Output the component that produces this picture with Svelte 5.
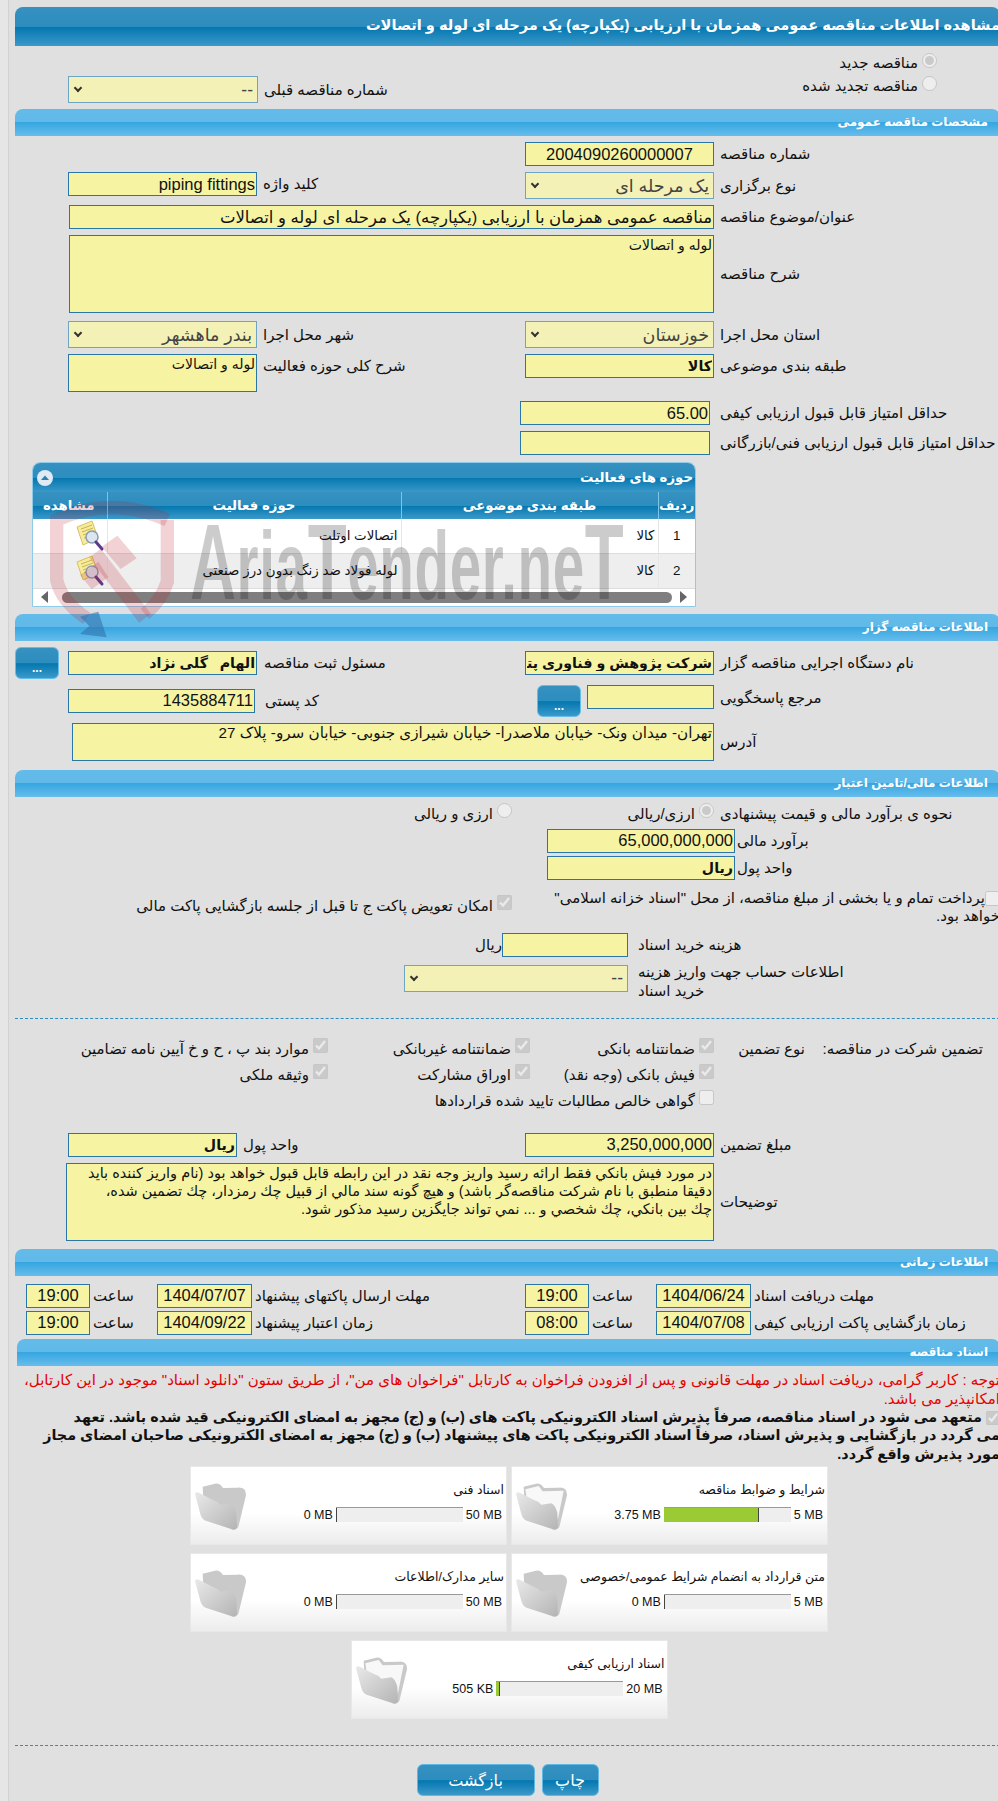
<script>
	const bars = {
		title: 'مشاهده اطلاعات مناقصه عمومی همزمان با ارزیابی (یکپارچه) یک مرحله ای لوله و اتصالات'
	};

	const activities = [
		{ id: 1, cat: 'کالا', name: 'اتصالات اوتلت' },
		{ id: 2, cat: 'کالا', name: 'لوله فولاد ضد زنگ بدون درز صنعتی' }
	];

	const docs = [
		{ title: 'شرایط و ضوابط مناقصه', used: '3.75 MB', max: '5 MB', pct: 75, full: true },
		{ title: 'اسناد فنی', used: '0 MB', max: '50 MB', pct: 0, full: false },
		{ title: 'متن قرارداد به انضمام شرایط عمومی/خصوصی', used: '0 MB', max: '5 MB', pct: 0, full: false },
		{ title: 'سایر مدارک/اطلاعات', used: '0 MB', max: '50 MB', pct: 0, full: false },
		{ title: 'اسناد ارزیابی کیفی', used: '505 KB', max: '20 MB', pct: 2.5, full: true }
	];

	const guarantees = [
		[{ label: 'ضمانتنامه بانکی', on: true }, { label: 'ضمانتنامه غیربانکی', on: true }, { label: 'موارد بند پ ، ح و خ آیین نامه تضامین', on: true }],
		[{ label: 'فیش بانکی (وجه نقد)', on: true }, { label: 'اوراق مشارکت', on: true }, { label: 'وثیقه ملکی', on: true }]
	];

	const note = 'در مورد فيش بانكي فقط ارائه رسيد واريز وجه نقد در اين رابطه قابل قبول خواهد بود (نام واریز کننده باید\nدقيقا منطبق با نام شرکت مناقصه‌گر باشد) و هيچ گونه سند مالي از قبيل چك رمزدار، چك تضمين شده،\nچك بين بانكي، چك شخصي و ... نمي تواند جايگزين رسيد مذكور شود.';
</script>

<div class="page">
	<div class="sheet">
		<div class="bar dark">{bars.title}</div>

		<!-- tender type -->
		<div class="grid top-rows">
			<div class="opt-cell"><label class="opt"><input type="radio" name="kind" checked disabled /><span>مناقصه جدید</span></label></div>
			<div></div>
			<div class="opt-cell"><label class="opt"><input type="radio" name="kind" disabled /><span>مناقصه تجدید شده</span></label></div>
			<div class="f left">
				<span class="sel w190"><select disabled><option>--</option></select><i></i></span>
				<span class="lab">شماره مناقصه قبلی</span>
			</div>
		</div>

		<div class="bar light">مشخصات مناقصه عمومی</div>
		<div class="grid general">
			<div class="f"><input class="w189 c" readonly value="2004090260000007" /><span class="lab">شماره مناقصه</span></div>
			<div></div>

			<div class="f"><span class="sel w189"><select disabled><option>یک مرحله ای</option></select><i></i></span><span class="lab">نوع برگزاری</span></div>
			<div class="f left"><input class="w189 h25" readonly value="piping fittings" /><span class="lab">کلید واژه</span></div>

			<div class="f wide"><input class="w645" readonly value="مناقصه عمومی همزمان با ارزیابی (یکپارچه) یک مرحله ای لوله و اتصالات" /><span class="lab">عنوان/موضوع مناقصه</span></div>

			<div class="f wide"><textarea class="w645 h78" readonly>لوله و اتصالات</textarea><span class="lab">شرح مناقصه</span></div>

			<div class="f"><span class="sel w189"><select disabled><option>خوزستان</option></select><i></i></span><span class="lab">استان محل اجرا</span></div>
			<div class="f left"><span class="sel w189"><select disabled><option>بندر ماهشهر</option></select><i></i></span><span class="lab">شهر محل اجرا</span></div>

			<div class="f"><input class="w189 strong" readonly value="کالا" /><span class="lab">طبقه بندی موضوعی</span></div>
			<div class="f left start"><textarea class="w189 h38" readonly>لوله و اتصالات</textarea><span class="lab lab-top">شرح کلی حوزه فعالیت</span></div>

			<div class="f shifted"><input class="w190" readonly value="65.00" /><span class="lab">حداقل امتیاز قابل قبول ارزیابی کیفی</span></div>
			<div></div>
			<div class="f shifted"><input class="w190 h25" readonly value="" /><span class="lab">حداقل امتیاز قابل قبول ارزیابی فنی/بازرگانی</span></div>
			<div></div>
		</div>

		<div class="activity">
			<div class="activity-head">
				<span>حوزه های فعالیت</span>
				<span class="collapse"><svg viewBox="0 0 16 16" width="16" height="16"><circle cx="8" cy="8" r="8" fill="#dfeaf4"/><path d="M4 10 L8 5.5 L12 10 Z" fill="#2d7fb0"/></svg></span>
			</div>
			<table>
				<colgroup><col class="c1" /><col class="c2" /><col class="c3" /><col class="c4" /></colgroup>
				<thead>
					<tr><th>ردیف</th><th>طبقه بندی موضوعی</th><th>حوزه فعالیت</th><th>مشاهده</th></tr>
				</thead>
				<tbody>
					{#each activities as row}
						<tr>
							<td class="num">{row.id}</td>
							<td>{row.cat}</td>
							<td>{row.name}</td>
							<td class="view">
								<svg viewBox="0 0 30 32" width="30" height="32">
									<path d="M2 7 L17 1 L23 18 L8 25 Z" fill="#f7ec9c" stroke="#d8c060" stroke-width="1"/>
									<path d="M6 9 L17 5 M7 12 L18 8 M8 15 L19 11 M9 18 L16 15" stroke="#c9b255" stroke-width="1"/>
									<circle cx="17" cy="17" r="6" fill="#dbe6f0" stroke="#8a9db0" stroke-width="1.5"/>
									<path d="M21 22 L27 29" stroke="#5a3b8c" stroke-width="3" stroke-linecap="round"/>
								</svg>
							</td>
						</tr>
					{/each}
				</tbody>
			</table>
			<div class="hscroll">
				<span class="tri tri-l"></span>
				<span class="thumb"></span>
				<span class="tri tri-r"></span>
			</div>
		</div>

		<div class="bar light gap7">اطلاعات مناقصه گزار</div>
		<div class="grid owner">
			<div class="f"><input class="w189 strong" readonly value="شرکت پژوهش و فناوری پتروشیمی" /><span class="lab">نام دستگاه اجرایی مناقصه گزار</span></div>
			<div class="f left-btn"><button class="more">...</button><input class="w189 strong" readonly value="الهام   گلی نژاد" /><span class="lab lab8">مسئول ثبت مناقصه</span></div>

			<div class="f ref"><button class="more">...</button><input class="w127" readonly value="" /><span class="lab">مرجع پاسخگویی</span></div>
			<div class="f left low"><input class="w187" readonly value="1435884711" /><span class="lab lab10">کد پستی</span></div>

			<div class="f wide addr"><textarea class="w642 h38" readonly>تهران- میدان ونک- خیابان ملاصدرا- خیابان شیرازی جنوبی- خیابان سرو- پلاک 27</textarea><span class="lab">آدرس</span></div>
		</div>

		<div class="bar light">اطلاعات مالی/تامین اعتبار</div>
		<div class="grid estimate-kind">
			<div class="f"><span class="opt-box"><label class="opt"><input type="radio" name="cur" checked disabled /><span>ارزی/ریالی</span></label></span><span class="lab">نحوه ی برآورد مالی و قیمت پیشنهادی</span></div>
			<div class="opt-end"><label class="opt"><input type="radio" name="cur" disabled /><span>ارزی و ریالی</span></label></div>
		</div>
		<div class="money">
			<div class="f"><input class="w188" readonly value="65,000,000,000" /><span class="lab">برآورد مالی</span></div>
			<div class="f"><input class="w188 strong" readonly value="ریال" /><span class="lab">واحد پول</span></div>
		</div>
		<div class="grid checks-two">
			<div class="treasury"><input type="checkbox" disabled />پرداخت تمام و یا بخشی از مبلغ مناقصه، از محل "اسناد خزانه اسلامی" خواهد بود.</div>
			<div class="opt-end swap"><label class="opt"><input type="checkbox" checked disabled /><span>امکان تعویض پاکت ج تا قبل از جلسه بازگشایی پاکت مالی</span></label></div>
		</div>
		<div class="cost">
			<span class="rial">ریال</span>
			<input class="w126" readonly value="" />
			<span class="lab">هزینه خرید اسناد</span>
		</div>
		<div class="account">
			<span class="sel w224"><select disabled><option>--</option></select><i></i></span>
			<span class="lab two">اطلاعات حساب جهت واریز هزینه خرید اسناد</span>
		</div>

		<div class="dots"></div>

		<div class="guarantee">
			<span class="g-title">تضمین شرکت در مناقصه:</span>
			<span class="g-kind">نوع تضمین</span>
			{#each guarantees[0] as g}
				<label class="opt"><input type="checkbox" checked={g.on} disabled /><span>{g.label}</span></label>
			{/each}
			<span></span><span></span>
			{#each guarantees[1] as g}
				<label class="opt"><input type="checkbox" checked={g.on} disabled /><span>{g.label}</span></label>
			{/each}
			<span></span><span></span>
			<label class="opt span3"><input type="checkbox" disabled /><span>گواهی خالص مطالبات تایید شده قراردادها</span></label>
		</div>

		<div class="grid amount">
			<div class="f"><input class="w189" readonly value="3,250,000,000" /><span class="lab">مبلغ تضمین</span></div>
			<div class="f left"><input class="w169 strong" readonly value="ریال" /><span class="lab">واحد پول</span></div>
			<div class="f wide wide-note"><textarea class="w648 h78 note" readonly>{note}</textarea><span class="lab">توضیحات</span></div>
		</div>

		<div class="bar light">اطلاعات زمانی</div>
		<div class="grid times">
			<div class="t"><input class="time" readonly value="19:00" /><span class="sa">ساعت</span><input class="date" readonly value="1404/06/24" /><span class="lab">مهلت دریافت اسناد</span></div>
			<div class="t tl"><input class="time" readonly value="19:00" /><span class="sa">ساعت</span><input class="date" readonly value="1404/07/07" /><span class="lab">مهلت ارسال پاکتهای پیشنهاد</span></div>
			<div class="t"><input class="time" readonly value="08:00" /><span class="sa">ساعت</span><input class="date" readonly value="1404/07/08" /><span class="lab">زمان بازگشایی پاکت ارزیابی کیفی</span></div>
			<div class="t tl"><input class="time" readonly value="19:00" /><span class="sa">ساعت</span><input class="date" readonly value="1404/09/22" /><span class="lab">زمان اعتبار پیشنهاد</span></div>
		</div>

		<div class="bar light docs-bar">اسناد مناقصه</div>
		<p class="warn">توجه : کاربر گرامی، دریافت اسناد در مهلت قانونی و پس از افزودن فراخوان به کارتابل "فراخوان های من"، از طریق ستون "دانلود اسناد" موجود در این کارتابل،<br />امکانپذیر می باشد.</p>
		<p class="pledge"><input type="checkbox" checked disabled /> متعهد می شود در اسناد مناقصه، صرفاً پذیرش اسناد الکترونیکی پاکت های (ب) و (ج) مجهز به امضای الکترونیکی قید شده باشد. تعهد<br />می گردد در بازگشایی و پذیرش اسناد، صرفاً اسناد الکترونیکی پاکت های پیشنهاد (ب) و (ج) مجهز به امضای الکترونیکی صاحبان امضای مجاز<br />مورد پذیرش واقع گردد.</p>

		<div class="cards">
			{#each docs as doc}
				<div class="card">
					<div class="card-body">
						<div class="card-title">{doc.title}</div>
						<div class="meter">
							<span class="m-val">{doc.max}</span>
							<span class="track"><span class="fill" style="width:{doc.pct}%"></span></span>
							<span class="m-val">{doc.used}</span>
						</div>
					</div>
					<svg class="folder" viewBox="0 0 160 150" width="54" height="50">
						<defs>
							<linearGradient id="fg" x1="0" y1="0" x2="1" y2="1">
								<stop offset="0" stop-color="#e9e9e9"/>
								<stop offset="1" stop-color="#b4b4b4"/>
							</linearGradient>
						</defs>
						<path d="M25 14 L62 5 Q76 3 86 18 L130 17 Q156 15 155 40 L132 135 Q126 146 112 138 L30 112 Z" fill="#c9c9c9"/>
						{#if doc.full}
							<path d="M30 22 L70 12 L82 28 L145 26 L128 110 L40 90 Z" fill="#f8f8f8"/>
						{/if}
						<path d="M2 36 Q4 28 15 33 L56 54 Q70 58 78 68 L108 64 Q120 70 126 92 L128 136 Q124 148 110 141 L34 116 Q22 112 18 96 Z" fill="url(#fg)"/>
					</svg>
				</div>
			{/each}
		</div>

		<div class="dots dots2"></div>

		<div class="actions">
			<button class="action print">چاپ</button>
			<button class="action back">بازگشت</button>
		</div>

		<div class="watermark" aria-hidden="true">
			<svg class="shield" viewBox="0 0 600 465" width="200" height="155">
				<g fill="none" stroke="#c0202c" stroke-opacity="0.2" stroke-width="40">
					<path d="M412 90 Q245 15 80 90 L80 270 Q95 335 170 385"/>
					<path d="M412 90 L412 275 Q395 330 345 372"/>
					<path d="M195 190 L345 385" stroke-width="44"/>
				</g>
				<path d="M262 137 L320 205 L272 237 L215 170 Z M150 255 L205 215 L235 262 L185 298 Z" fill="#c0202c" fill-opacity="0.2"/>
				<path d="M205 365 L230 442 L150 432 L178 408 L150 380 L178 372 Z" fill="#2f6ea8" fill-opacity="0.55"/>
			</svg>
			<span class="mark"><span class="big">A</span>ria<span class="big">T</span>ender.ne<span class="big">T</span></span>
		</div>
	</div>
</div>

<style>
	:global(body) {
		margin: 0;
		background: #e0e0e0;
	}

	* {
		box-sizing: border-box;
	}

	.page {
		width: 998px;
		height: 1801px;
		overflow: hidden;
		padding: 7px 0 0 15px;
		background: linear-gradient(90deg, #e6e6e6 0, #e6e6e6 8px, #d2d2d2 8px, #d2d2d2 9px, #e0e0e0 9px);
	}

	.sheet {
		position: relative;
		width: 985px;
		direction: rtl;
		font-family: "Liberation Sans", "DejaVu Sans", sans-serif;
		font-size: 15px;
		color: #111;
	}

	.bar {
		color: #fff;
		font-weight: bold;
		border-radius: 8px 8px 0 0;
		white-space: nowrap;
		overflow: hidden;
	}

	.dark {
		height: 39px;
		line-height: 37px;
		font-size: 14.6px;
		background: linear-gradient(#3591c0 0, #2d8dbe 50%, #0477b0 52%, #3b99c9 100%);
	}

	.light {
		height: 27px;
		line-height: 27px;
		font-size: 12px;
		padding-right: 12px;
		background: linear-gradient(#63bbe9 0, #60b9e8 48%, #36a6e0 50%, #67bdec 100%);
	}

	.gap7 {
		margin-top: 7px;
	}

	.docs-bar {
		margin-top: 4px;
		margin-left: 2px;
	}

	.grid {
		display: grid;
		grid-template-columns: 475px 510px;
		align-items: start;
	}

	.top-rows {
		grid-template-rows: 23px 33px;
		padding-top: 7px;
	}

	.general {
		grid-template-rows: 30px 33px 30px 86px 33px 47px 30px 31px;
		padding-top: 6px;
	}

	.owner {
		grid-template-rows: 35px 37px 47px;
		padding-top: 10px;
	}

	.estimate-kind {
		padding-top: 8px;
		height: 32px;
	}

	.checks-two {
		padding-top: 9px;
		height: 53px;
	}

	.amount {
		grid-template-rows: 30px 86px;
		margin-top: 19px;
	}

	.times {
		grid-template-rows: 27px 24px;
		padding-top: 8px;
	}

	/* field: input on the left, label right after it */
	.f {
		display: flex;
		direction: ltr;
		align-items: center;
		gap: 6px;
	}

	.left {
		padding-left: 53px;
	}

	.left-btn {
		gap: 9px;
		margin-top: -4px;
	}

	.start {
		align-items: flex-start;
	}

	.wide {
		grid-column: 1 / -1;
		padding-left: 54px;
	}

	.addr {
		padding-left: 57px;
	}

	.addr textarea {
		font-size: 15.2px;
	}

	.wide-note {
		padding-left: 51px;
	}

	.shifted {
		gap: 10px;
		margin-left: -5px;
	}

	.ref {
		padding-left: 12px;
		align-items: flex-start;
		margin-top: -1px;
	}

	.ref input {
		margin-top: 1px;
	}

	.ref .lab {
		margin-top: 4px;
	}

	.low {
		margin-top: 3px;
	}

	.lab {
		direction: rtl;
		text-align: left;
		white-space: nowrap;
		line-height: 18px;
	}

	.lab-top {
		margin-top: 3px;
	}

	.lab8 {
		margin-left: -2px;
	}

	.lab10 {
		margin-left: 4px;
	}

	input:not([type]), textarea {
		direction: rtl;
		height: 24px;
		background: #f6f4a3;
		border: 1px solid #2a76a8;
		border-radius: 0;
		padding: 0 1px;
		margin: 0;
		font-family: inherit;
		font-size: 16.5px;
		color: #111;
		outline: none;
		flex: none;
		display: block;
	}

	textarea {
		resize: none;
		overflow: hidden;
		font-size: 14px;
		line-height: 18px;
	}

	.note {
		font-size: 14.5px;
	}

	input.strong {
		font-weight: bold;
		font-size: 14.2px;
	}

	input.c {
		text-align: center;
	}

	.w126 { width: 126px; }
	.w127 { width: 127px; }
	.w169 { width: 169px; }
	.w187 { width: 187px; }
	.w188 { width: 188px; }
	.w189 { width: 189px; }
	.w190 { width: 190px; }
	.w224 { width: 224px; }
	.w642 { width: 642px; }
	.w645 { width: 645px; }
	.w648 { width: 648px; }
	.h25 { height: 25px; }
	.h38 { height: 38px; }
	.h78 { height: 78px; }

	.sel {
		position: relative;
		display: block;
		height: 27px;
		flex: none;
	}

	.sel select {
		direction: rtl;
		appearance: none;
		width: 100%;
		height: 100%;
		padding: 0 4px 0 20px;
		background: #f3f1b6;
		border: 1px solid #6ea5c5;
		border-radius: 0;
		font-family: inherit;
		font-size: 17.5px;
		color: #444;
		opacity: 1;
	}

	.sel i {
		position: absolute;
		left: 7px;
		top: 9px;
		width: 6px;
		height: 6px;
		border-left: 2px solid #333;
		border-bottom: 2px solid #333;
		transform: rotate(-45deg);
	}

	.opt {
		direction: rtl;
		display: inline-flex;
		align-items: center;
		gap: 4px;
		white-space: nowrap;
	}

	.opt input {
		margin: 0;
		width: 15px;
		height: 15px;
		flex: none;
		position: relative;
		top: -3px;
	}

	.opt-cell {
		display: flex;
		direction: ltr;
		padding-left: 182px;
		height: 20px;
	}

	.opt-cell .opt {
		width: 230px;
	}

	.opt-box {
		display: block;
		width: 189px;
		direction: rtl;
	}

	.opt-end {
		padding-right: 13px;
	}

	.swap {
		padding-top: 8px;
	}

	.treasury {
		line-height: 18px;
		padding-left: 14px;
	}

	.treasury input {
		width: 15px;
		height: 15px;
		margin: 0;
		vertical-align: middle;
	}

	.money {
		padding-left: 532px;
		direction: ltr;
		display: flex;
		flex-direction: column;
		gap: 3px;
	}

	.money .f {
		gap: 2px;
	}

	.cost {
		display: flex;
		direction: ltr;
		align-items: center;
		padding-left: 463px;
	}

	.rial {
		width: 24px;
		direction: rtl;
	}

	.cost .lab {
		margin-left: 10px;
	}

	.account {
		display: flex;
		direction: ltr;
		height: 27px;
		padding-left: 389px;
		margin-top: 8px;
		align-items: flex-start;
	}

	.two {
		white-space: normal;
		width: 216px;
		margin-left: 10px;
		margin-top: -3px;
		line-height: 19px;
	}

	.dots {
		border-top: 1px dashed #2d8dbe;
		margin-top: 26px;
		margin-right: -15px;
	}

	.dots2 {
		margin-top: 26px;
	}

	.guarantee {
		display: grid;
		grid-template-columns: 178px 91px 184px 202px 1fr;
		grid-auto-rows: 26px;
		align-items: center;
		padding: 17px 17px 0 0;
	}

	.span3 {
		grid-column: span 3;
	}

	.t {
		display: flex;
		direction: ltr;
		align-items: center;
	}

	.tl {
		padding-left: 11px;
	}

	input.time {
		width: 64px;
		text-align: center;
	}

	input.date {
		width: 95px;
		text-align: center;
	}

	.sa {
		width: 60px;
		margin: 0 4px 0 3px;
		direction: rtl;
		text-align: left;
	}

	.t .lab {
		margin-left: 3px;
	}

	.warn {
		margin: 4px 0 0;
		color: #e60000;
		line-height: 19px;
		font-size: 15px;
		white-space: nowrap;
	}

	.pledge {
		margin: 0;
		font-weight: bold;
		line-height: 18.5px;
		font-size: 14.4px;
		white-space: nowrap;
	}

	.pledge input {
		width: 14px;
		height: 14px;
		margin: 0;
		vertical-align: middle;
	}

	.cards {
		width: 640px;
		margin: 3px auto 0 174px;
		display: flex;
		flex-wrap: wrap;
		justify-content: center;
		gap: 8px 4px;
	}

	.card {
		width: 317px;
		height: 79px;
		display: flex;
		align-items: flex-start;
		justify-content: space-between;
		padding: 0 2px 0 3px;
		background: linear-gradient(#fff 0, #fff 60%, #ececec 100%);
		border: 1px solid #e8e8e8;
	}

	.card-body {
		flex: 1;
		min-width: 0;
	}

	.card-title {
		font-size: 12.5px;
		line-height: 16px;
		margin-top: 15px;
		white-space: nowrap;
	}

	.meter {
		display: flex;
		align-items: center;
		gap: 3px;
		margin-top: 9px;
		font-size: 12.5px;
		padding-right: 2px;
	}

	.m-val {
		direction: ltr;
		white-space: nowrap;
	}

	.track {
		width: 127px;
		height: 15px;
		display: flex;
		direction: ltr;
		background: #eee;
		border-top: 1px solid #999;
	}

	.fill {
		display: block;
		height: 100%;
		min-width: 1px;
		background: #9acb34;
		border-right: 1px solid #444;
	}

	.folder {
		flex: none;
		margin-top: 15px;
	}

	.activity {
		position: relative;
		width: 664px;
		margin: 0 auto 0 17px;
		background: #fff;
		border: 1px solid #8ecae9;
		border-radius: 8px 8px 0 0;
		overflow: hidden;
	}

	.activity-head {
		height: 29px;
		display: flex;
		align-items: center;
		justify-content: space-between;
		padding: 0 2px 0 4px;
		color: #fff;
		font-weight: bold;
		font-size: 13.3px;
		background: linear-gradient(#3591c0 0, #2d8dbe 50%, #0477b0 52%, #3b99c9 100%);
	}

	.collapse {
		display: flex;
	}

	table {
		width: 100%;
		table-layout: fixed;
		border-collapse: collapse;
	}

	.c1 { width: 37px; }
	.c2 { width: 257px; }
	.c3 { width: 294px; }
	.c4 { width: 76px; }

	th {
		height: 27px;
		padding: 0;
		color: #fff;
		font-size: 13.3px;
		font-weight: bold;
		white-space: nowrap;
		overflow: hidden;
		border-left: 1px solid #7cc4e8;
		background: linear-gradient(#3591c0 0, #2d8dbe 50%, #0477b0 52%, #3b99c9 100%);
	}

	th:last-child {
		border-left: 0;
	}

	td {
		height: 34px;
		padding: 0 3px;
		font-size: 13.4px;
		border-left: 1px solid #e6e6e6;
		border-bottom: 1px solid #ddd;
		white-space: nowrap;
		overflow: hidden;
	}

	tbody tr:nth-child(2) td {
		background: #eee;
		height: 35px;
	}

	td:last-child {
		border-left: 0;
	}

	.num {
		text-align: center;
	}

	td.view {
		padding: 0;
	}

	.view svg {
		display: block;
		margin: 0 2px 0 0;
	}

	.hscroll {
		height: 17px;
		display: flex;
		align-items: center;
		direction: ltr;
		gap: 5px;
		padding: 0 8px;
	}

	.thumb {
		flex: 1;
		height: 11px;
		border-radius: 6px;
		background: #7f7f7f;
	}

	.tri {
		width: 0;
		height: 0;
		border-top: 6px solid transparent;
		border-bottom: 6px solid transparent;
	}

	.tri-l {
		border-right: 7px solid #666;
		margin-right: 9px;
	}

	.tri-r {
		border-left: 7px solid #666;
		margin-left: 3px;
	}

	.more {
		width: 44px;
		height: 32px;
		flex: none;
		padding: 10px 0 0;
		color: #fff;
		font-size: 12px;
		font-weight: bold;
		font-family: inherit;
		border: 1px solid #62bde9;
		border-radius: 6px;
		background: linear-gradient(#3591c0 0, #2d8dbe 50%, #0477b0 52%, #3b99c9 100%);
	}

	.actions {
		display: flex;
		justify-content: center;
		gap: 7px;
		margin-top: 18px;
	}

	.action {
		height: 32px;
		color: #fff;
		font-family: inherit;
		font-size: 16px;
		border: 1px solid #5fb8e4;
		border-radius: 6px;
		background: linear-gradient(#3591c0 0, #2d8dbe 50%, #0477b0 52%, #3b99c9 100%);
	}

	.print {
		width: 57px;
	}

	.back {
		width: 118px;
	}

	.watermark {
		position: absolute;
		left: 0;
		top: 0;
		width: 700px;
		height: 650px;
		direction: ltr;
		pointer-events: none;
	}

	.shield {
		position: absolute;
		left: 15px;
		top: 483px;
	}

	.mark {
		position: absolute;
		left: 175px;
		top: 505px;
		font-family: "Liberation Sans", sans-serif;
		font-weight: bold;
		font-size: 96px;
		line-height: 100px;
		letter-spacing: 1px;
		color: rgba(0, 0, 0, 0.2);
		white-space: nowrap;
		transform: scaleX(0.59);
		transform-origin: left top;
	}

	.big {
		font-size: 108px;
	}
</style>
